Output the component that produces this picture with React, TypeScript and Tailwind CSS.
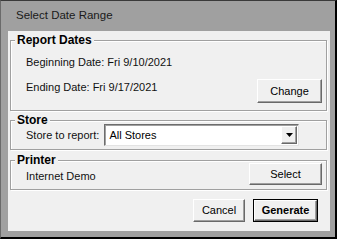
const FONT = "font-['Liberation_Sans',Arial,sans-serif]"

const raised =
  "bg-[#f0f0f0] border border-t-white border-l-white border-r-[#696969] border-b-[#696969] shadow-[inset_-1px_-1px_0_#a0a0a0] text-[11px] leading-none text-black flex items-center justify-center"

function Group({ title, className, children }: { title: string; className?: string; children: React.ReactNode }) {
  return (
    <div
      className={
        "flex flex-col border border-[#a0a0a0] shadow-[1px_1px_0_white,inset_1px_1px_0_white] " + (className ?? "")
      }
    >
      <span className="-mt-[8px] ml-[4px] px-[2px] self-start h-[15px] leading-[15px] text-[12px] font-bold text-black bg-[#f0f0f0]">
        {title}
      </span>
      {children}
    </div>
  )
}

export default function App() {
  return (
    <div
      className={
        "w-[337px] h-[239px] flex flex-col bg-[#a0a0a0] border-t border-l border-t-[#3a3a3a] border-l-[#6a6a6a] border-r-2 border-b-2 border-r-black border-b-black text-[11px] text-[#111] " +
        FONT
      }
    >
      {/* Title */}
      <div className="h-[30px] pl-[15px] flex items-center text-[11.5px] text-[#1a1a1a]">Select Date Range</div>

      {/* Body */}
      <div className="flex-1 ml-[7px] mr-[5px] mb-[6px] bg-[#f0f0f0] pl-[2px] pr-[3px] flex flex-col">
        <Group title="Report Dates" className="mt-[9px] pr-[4px] pb-[7px]">
          <div className="ml-[15px] mt-[7px] h-[15px] leading-[15px]">Beginning Date: Fri 9/10/2021</div>
          <div className="ml-[15px] mt-[9px] flex justify-between items-start">
            <span className="mt-[1px] h-[15px] leading-[15px]">Ending Date: Fri 9/17/2021</span>
            <button className={raised + " w-[65px] h-[24px]"}>Change</button>
          </div>
        </Group>

        <Group title="Store" className="mt-[9px] pb-[3px]">
          <div className="ml-[15px] -mt-[4px] flex items-center">
            <span className="leading-[15px] mt-[1px]">Store to report:</span>
            <div className="ml-[5px] w-[195px] h-[22px] bg-white border border-t-[#6d6d6d] border-l-[#6d6d6d] border-r-[#e3e3e3] border-b-[#e3e3e3] shadow-[inset_1px_1px_0_#a0a0a0] flex items-center pl-[4px] pr-[1px]">
              <span className="flex-1 text-black">All Stores</span>
              <div className={raised + " w-[16px] h-[18px]"}>
                <svg width="7" height="4" viewBox="0 0 7 4">
                  <path d="M0 0h7L3.5 4z" fill="black" />
                </svg>
              </div>
            </div>
          </div>
        </Group>

        <Group title="Printer" className="mt-[10px] pr-[4px] pb-[4px]">
          <div className="ml-[15px] -mt-[5px] flex justify-between items-start">
            <span className="mt-[6px] leading-[15px]">Internet Demo</span>
            <button className={raised + " w-[73px] h-[22px]"}>Select</button>
          </div>
        </Group>

        <div className="mt-[9px] mr-[9px] flex justify-end gap-[8px]">
          <button className={raised + " w-[52px] h-[23px]"}>Cancel</button>
          <div className="w-[65px] h-[23px] border border-black flex">
            <button className={raised + " flex-1 font-bold"}>Generate</button>
          </div>
        </div>
      </div>
    </div>
  )
}
